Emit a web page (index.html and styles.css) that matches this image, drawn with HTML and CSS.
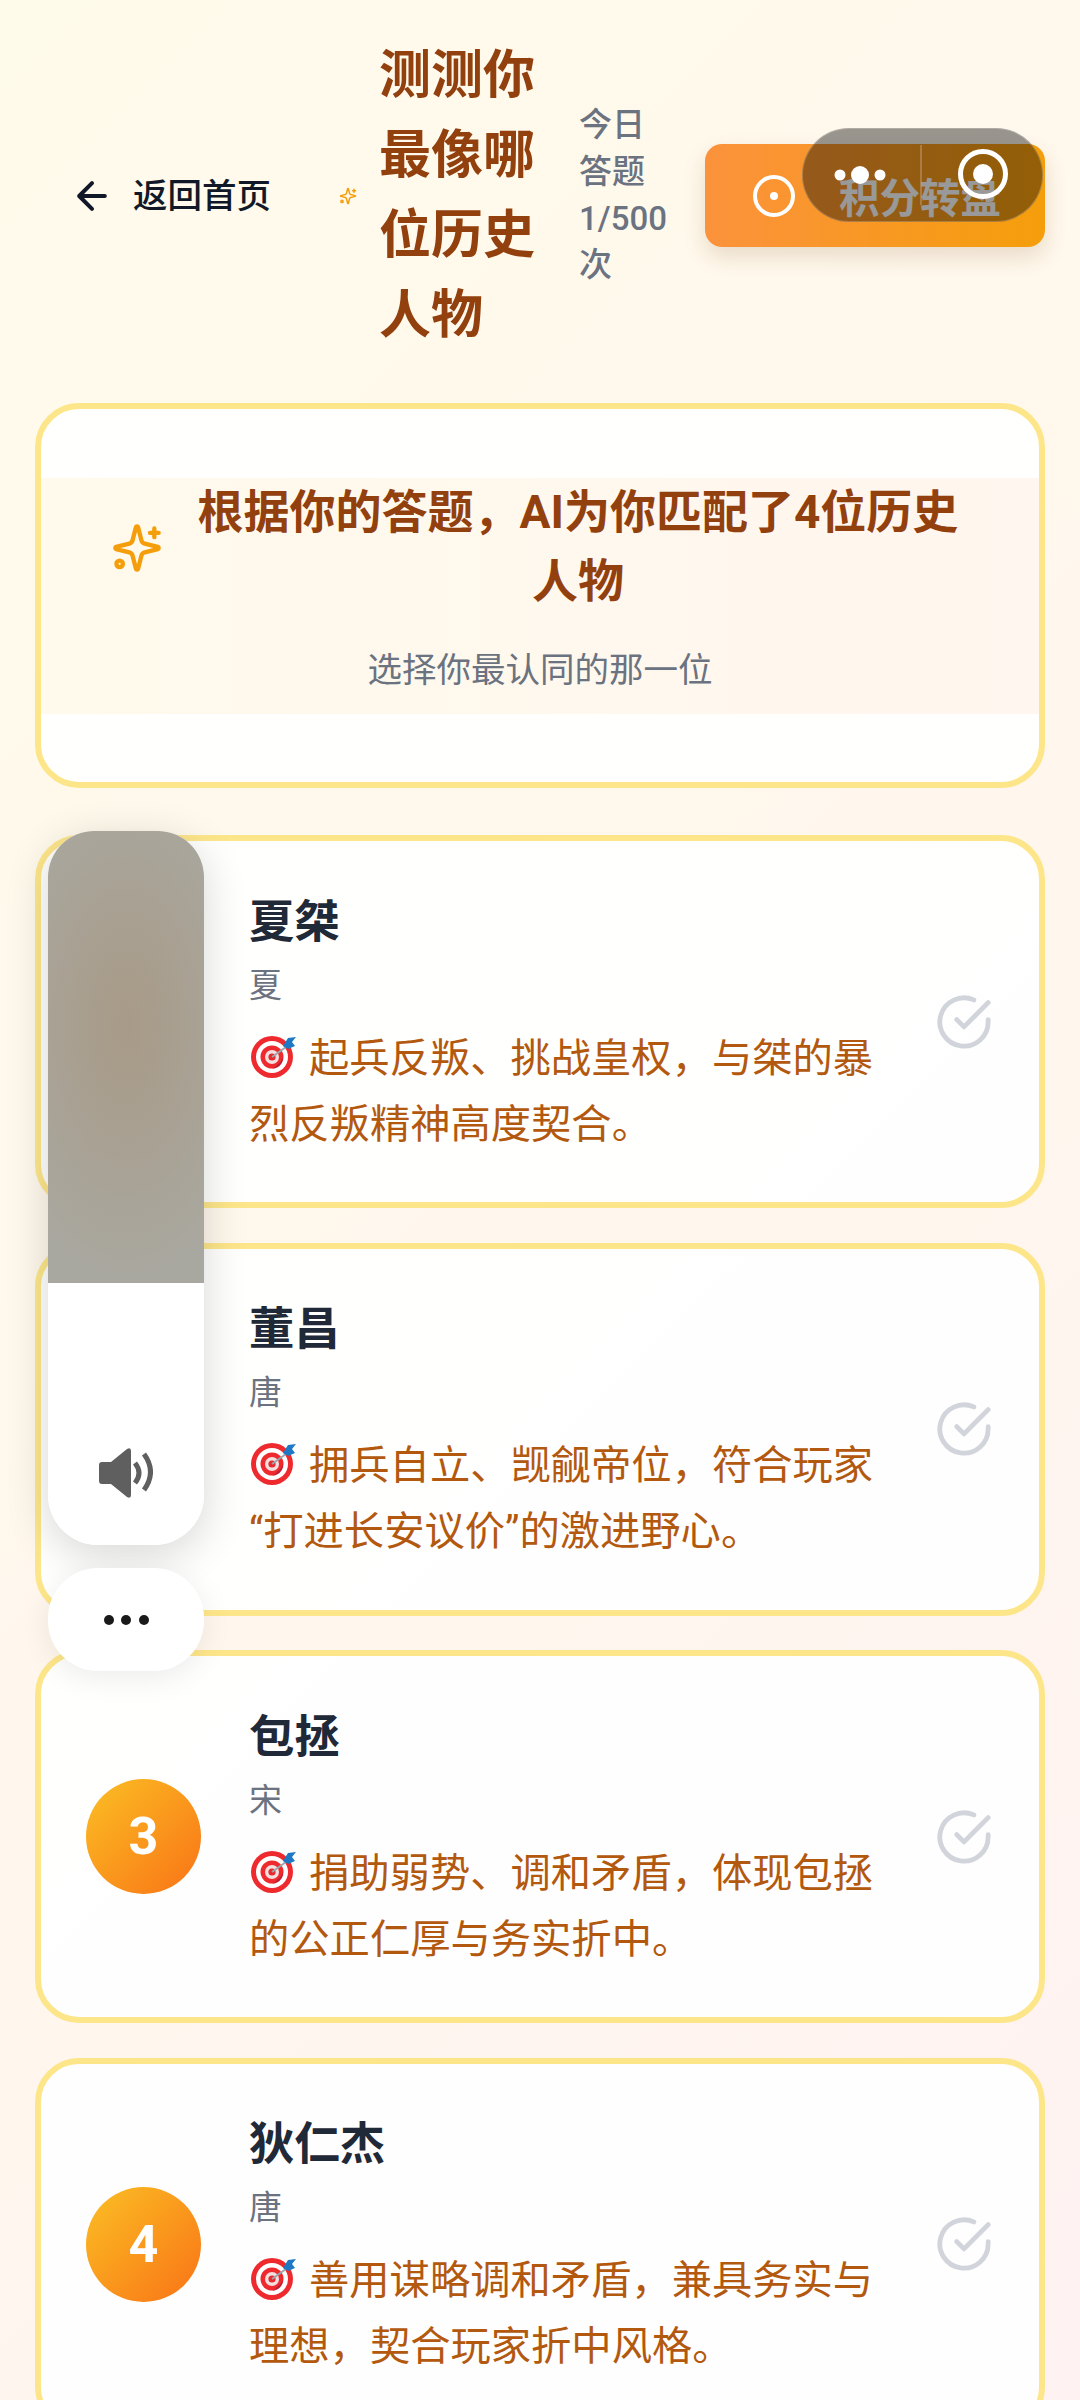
FILE: index.html
```html
<!DOCTYPE html>
<html lang="zh-CN">
<head>
<meta charset="utf-8">
<title>测测你最像哪位历史人物</title>
<link rel="stylesheet" href="styles.css">
</head>
<body>
<svg class="defs" width="0" height="0" aria-hidden="true">
  <symbol id="sparkles" viewBox="0 0 24 24">
    <path d="M9.937 15.5A2 2 0 0 0 8.5 14.063l-6.135-1.582a.5.5 0 0 1 0-.962L8.5 9.936A2 2 0 0 0 9.937 8.5l1.582-6.135a.5.5 0 0 1 .963 0L14.063 8.5A2 2 0 0 0 15.5 9.937l6.135 1.581a.5.5 0 0 1 0 .964L15.5 14.063a2 2 0 0 0-1.437 1.437l-1.582 6.135a.5.5 0 0 1-.963 0z" fill="none" stroke="currentColor" stroke-width="2" stroke-linejoin="round"/>
    <path d="M20 3v4M22 5h-4" fill="none" stroke="currentColor" stroke-width="2" stroke-linecap="round"/>
    <circle cx="4" cy="19.3" r="1.5" fill="none" stroke="currentColor" stroke-width="2"/>
  </symbol>
  <symbol id="target" viewBox="0 0 46 44">
    <circle cx="22" cy="23" r="21" fill="#ee2a2e"/>
    <path d="M37 37A21 21 0 0 1 22 44A21 21 0 0 0 37 37Z" fill="#b81f3a"/>
    <circle cx="22" cy="23" r="16" fill="#fff"/>
    <path d="M33 34A16 16 0 0 1 22 39A16 16 0 0 0 33 34Z" fill="#ddd"/>
    <circle cx="22" cy="23" r="11.5" fill="#ee2a2e"/>
    <path d="M28 30A11 11 0 0 0 33 23A11 11 0 0 1 22 34.5A11 11 0 0 0 28 30Z" fill="#b81f3a"/>
    <circle cx="22" cy="23" r="7" fill="#f4dede"/>
    <circle cx="22" cy="23" r="3.6" fill="#e8282c"/>
    <path d="M22 23L36 13" stroke="#9aa7ad" stroke-width="2"/>
    <path d="M33 12L38 4L46 3L42 8L45 12L38 15Z" fill="#1f78c4"/>
  </symbol>
  <symbol id="check" viewBox="0 0 24 24">
    <path d="M22 11.08V12a10 10 0 1 1-5.93-9.14M22 4 12 14.01l-3-3" fill="none" stroke="currentColor" stroke-width="2" stroke-linecap="round" stroke-linejoin="round"/>
  </symbol>
</svg>

<div class="app">
  <header class="header">
    <a class="back">
      <svg class="back-icon" viewBox="0 0 24 24"><path d="M19 12H5M12 19l-7-7 7-7" fill="none" stroke="currentColor" stroke-width="2.2" stroke-linecap="round" stroke-linejoin="round"/></svg>
      <span class="back-text">返回首页</span>
    </a>
    <svg class="head-spark"><use href="#sparkles"/></svg>
    <h1 class="head-title">测测你最像哪位历史人物</h1>
    <div class="counter">今日答题 1/500 次</div>
    <button class="wheel-btn">
      <svg class="wheel-icon" viewBox="0 0 42 42"><circle cx="21" cy="21" r="19" fill="none" stroke="#fff" stroke-width="4"/><circle cx="21" cy="21" r="4" fill="#fff"/></svg>
      <span class="wheel-text">积分转盘</span>
    </button>
  </header>

  <main class="list">
    <section class="card intro">
      <div class="intro-band">
        <div class="intro-row">
          <svg class="intro-spark"><use href="#sparkles"/></svg>
          <h2 class="intro-title">根据你的答题，AI为你匹配了4位历史人物</h2>
        </div>
        <p class="intro-sub">选择你最认同的那一位</p>
      </div>
    </section>

    <article class="card person">
      <div class="badge">1</div>
      <div class="info">
        <h3 class="name">夏桀</h3>
        <div class="era">夏</div>
        <p class="desc"><svg class="dart"><use href="#target"/></svg>起兵反叛、挑战皇权，与桀的暴烈反叛精神高度契合。</p>
      </div>
      <svg class="tick"><use href="#check"/></svg>
    </article>

    <article class="card person">
      <div class="badge">2</div>
      <div class="info">
        <h3 class="name">董昌</h3>
        <div class="era">唐</div>
        <p class="desc"><svg class="dart"><use href="#target"/></svg>拥兵自立、觊觎帝位，符合玩家“打进长安议价”的激进野心。</p>
      </div>
      <svg class="tick"><use href="#check"/></svg>
    </article>

    <article class="card person">
      <div class="badge">3</div>
      <div class="info">
        <h3 class="name">包拯</h3>
        <div class="era">宋</div>
        <p class="desc"><svg class="dart"><use href="#target"/></svg>捐助弱势、调和矛盾，体现包拯的公正仁厚与务实折中。</p>
      </div>
      <svg class="tick"><use href="#check"/></svg>
    </article>

    <article class="card person">
      <div class="badge">4</div>
      <div class="info">
        <h3 class="name">狄仁杰</h3>
        <div class="era">唐</div>
        <p class="desc"><svg class="dart"><use href="#target"/></svg>善用谋略调和矛盾，兼具务实与理想，契合玩家折中风格。</p>
      </div>
      <svg class="tick"><use href="#check"/></svg>
    </article>
  </main>

  <div class="capsule">
    <svg class="capsule-art" viewBox="0 0 241 94">
      <line x1="119" y1="17" x2="119" y2="77" stroke="#fff" stroke-opacity=".28" stroke-width="1.5"/>
      <circle cx="38" cy="47" r="5.5" fill="#fff"/>
      <circle cx="58" cy="47" r="9" fill="#fff"/>
      <circle cx="78" cy="47" r="5.5" fill="#fff"/>
      <circle cx="181" cy="46" r="22.5" fill="none" stroke="#fff" stroke-width="5"/>
      <circle cx="181" cy="46" r="10" fill="#fff"/>
    </svg>
  </div>

  <aside class="volume">
    <div class="volume-fill"></div>
    <div class="volume-foot">
      <svg class="speaker" viewBox="0 0 54 50">
        <path d="M3 14H12L28 1Q32-1 32 3V47Q32 51 28 49L12 36H3Q0 36 0 33V17Q0 14 3 14Z" fill="#5f5f5f"/>
        <path d="M36 15Q44 25 36 35M45 6Q58 24 45 42" fill="none" stroke="#5f5f5f" stroke-width="5"/>
      </svg>
    </div>
  </aside>
  <div class="more"><i></i><i></i><i></i></div>
</div>
</body>
</html>
```

FILE: styles.css
```css
* { box-sizing: border-box; margin: 0; padding: 0; }
html, body { width: 1080px; height: 2400px; overflow: hidden; }
body { font-family: Roboto, "Noto Sans CJK SC", sans-serif; }
.defs { position: absolute; }

.app {
  position: relative;
  width: 1080px;
  height: 2400px;
  overflow: hidden;
  background: linear-gradient(135deg, #fffbeb 0%, #fff7ed 50%, #fef2f2 100%);
}

/* header */
.header {
  display: flex;
  align-items: center;
  padding: 36px 0 0 70px;
  height: 355px;
}
.back { display: flex; align-items: center; gap: 19px; color: #111827; flex-shrink: 0; width: 200px; }
.back-icon { width: 44px; height: 44px; flex-shrink: 0; }
.back-text { font-size: 34.5px; font-weight: 500; white-space: nowrap; line-height: 46px; }
.head-spark { width: 18px; height: 18px; color: #f59e0b; margin-left: 69px; flex-shrink: 0; }
.head-title {
  width: 160px;
  margin-left: 22px;
  font-size: 52px;
  line-height: 80px;
  font-weight: 700;
  color: #92400e;
  flex-shrink: 0;
}
.counter {
  width: 90px;
  margin-left: 40px;
  font-size: 33px;
  line-height: 46.75px;
  font-weight: 500;
  color: #6b7280;
  flex-shrink: 0;
}
.wheel-btn {
  display: flex;
  align-items: center;
  gap: 44px;
  width: 340px;
  height: 103px;
  padding-left: 48px;
  margin-left: 36px;
  flex-shrink: 0;
  border: 0;
  border-radius: 17px;
  background: linear-gradient(90deg, #fb923c, #f59e0b);
  box-shadow: 0 10px 22px rgba(120, 70, 10, .16);
  color: #fff;
  font: 700 40.5px/1 Roboto, "Noto Sans CJK SC", sans-serif;
}
.wheel-icon { width: 42px; height: 42px; }
.wheel-text { padding-top: 7px; }

/* list */
.list {
  display: flex;
  flex-direction: column;
  gap: 34.5px;
  padding: 48px 35px 0;
}
.card {
  border: 6px solid #fde68a;
  border-radius: 44px;
  background: rgba(255, 255, 255, .9);
  flex-shrink: 0;
}
.intro { padding: 69px 0 68px; height: 385px; margin-bottom: 12.5px; }
.intro-band {
  background: linear-gradient(90deg, #fffaec, #fff6ef);
  padding-bottom: 21px;
}
.intro-row { display: flex; align-items: center; padding-left: 70px; padding-right: 73px; gap: 27px; }
.intro-spark { width: 52px; height: 52px; color: #f59e0b; flex-shrink: 0; margin-top: 2px; }
.intro-title {
  flex: 1;
  text-align: center;
  font-size: 46px;
  line-height: 69px;
  font-weight: 700;
  color: #92400e;
}
.intro-sub {
  margin-top: 31px;
  text-align: center;
  font-size: 34.5px;
  line-height: 46px;
  color: #6b7280;
}

.person {
  display: flex;
  align-items: center;
  padding: 47px 42px 47px 45px;
  height: 373px;
}
.badge {
  width: 115px;
  height: 115px;
  border-radius: 50%;
  flex-shrink: 0;
  display: flex;
  align-items: center;
  justify-content: center;
  background: linear-gradient(135deg, #fbbf24, #f97316);
  color: #fff;
  font-size: 52px;
  font-weight: 700;
  margin-right: 48px;
}
.info { flex: 1; min-width: 0; padding-top: 7px; margin-right: 42px; }
.name { font-size: 45.4px; line-height: 60px; font-weight: 700; color: #1f2937; }
.era { margin-top: 10px; font-size: 33px; line-height: 46px; color: #6b7280; }
.desc { margin-top: 17px; font-size: 40.3px; line-height: 66px; color: #b3590f; }
.dart { width: 46px; height: 44px; margin-left: 1px; margin-right: 13px; vertical-align: -6px; }
.tick { width: 58px; height: 58px; margin: 0 4px; color: #d1d5db; flex-shrink: 0; }

/* overlays */
.capsule {
  position: absolute;
  left: 802px;
  top: 128px;
  width: 241px;
  height: 94px;
  border-radius: 47px;
  background: rgba(0, 0, 0, .4);
  box-shadow: inset 0 0 0 1px rgba(255, 255, 255, .22);
}
.capsule-art { display: block; width: 241px; height: 94px; }

.volume {
  position: absolute;
  z-index: 1;
  left: 48px;
  top: 831px;
  width: 156px;
  height: 714px;
  border-radius: 46px 46px 50px 50px;
  overflow: hidden;
  background: #fff;
  display: flex;
  flex-direction: column;
}
.volume-fill {
  height: 452px;
  background: radial-gradient(ellipse 140px 260px at 50% 43%, #a89a87 0%, #a9a8a0 100%);
}
.volume-foot { flex: 1; display: flex; align-items: flex-end; justify-content: center; padding-bottom: 47px; }
.speaker { width: 54px; height: 50px; }
.app::after {
  content: "";
  position: absolute;
  left: 48px;
  top: 831px;
  width: 156px;
  height: 714px;
  border-radius: 46px 46px 50px 50px;
  box-shadow: 0 10px 44px rgba(0, 0, 0, .16);
  pointer-events: none;
}
.more {
  position: absolute;
  z-index: 1;
  left: 48px;
  top: 1568px;
  width: 156px;
  height: 103px;
  border-radius: 50px;
  background: #fff;
  box-shadow: 0 6px 30px rgba(0, 0, 0, .08);
  display: flex;
  align-items: center;
  justify-content: center;
  gap: 7.5px;
}
.more i { width: 10px; height: 10px; border-radius: 50%; background: #1a1a1a; }
```
